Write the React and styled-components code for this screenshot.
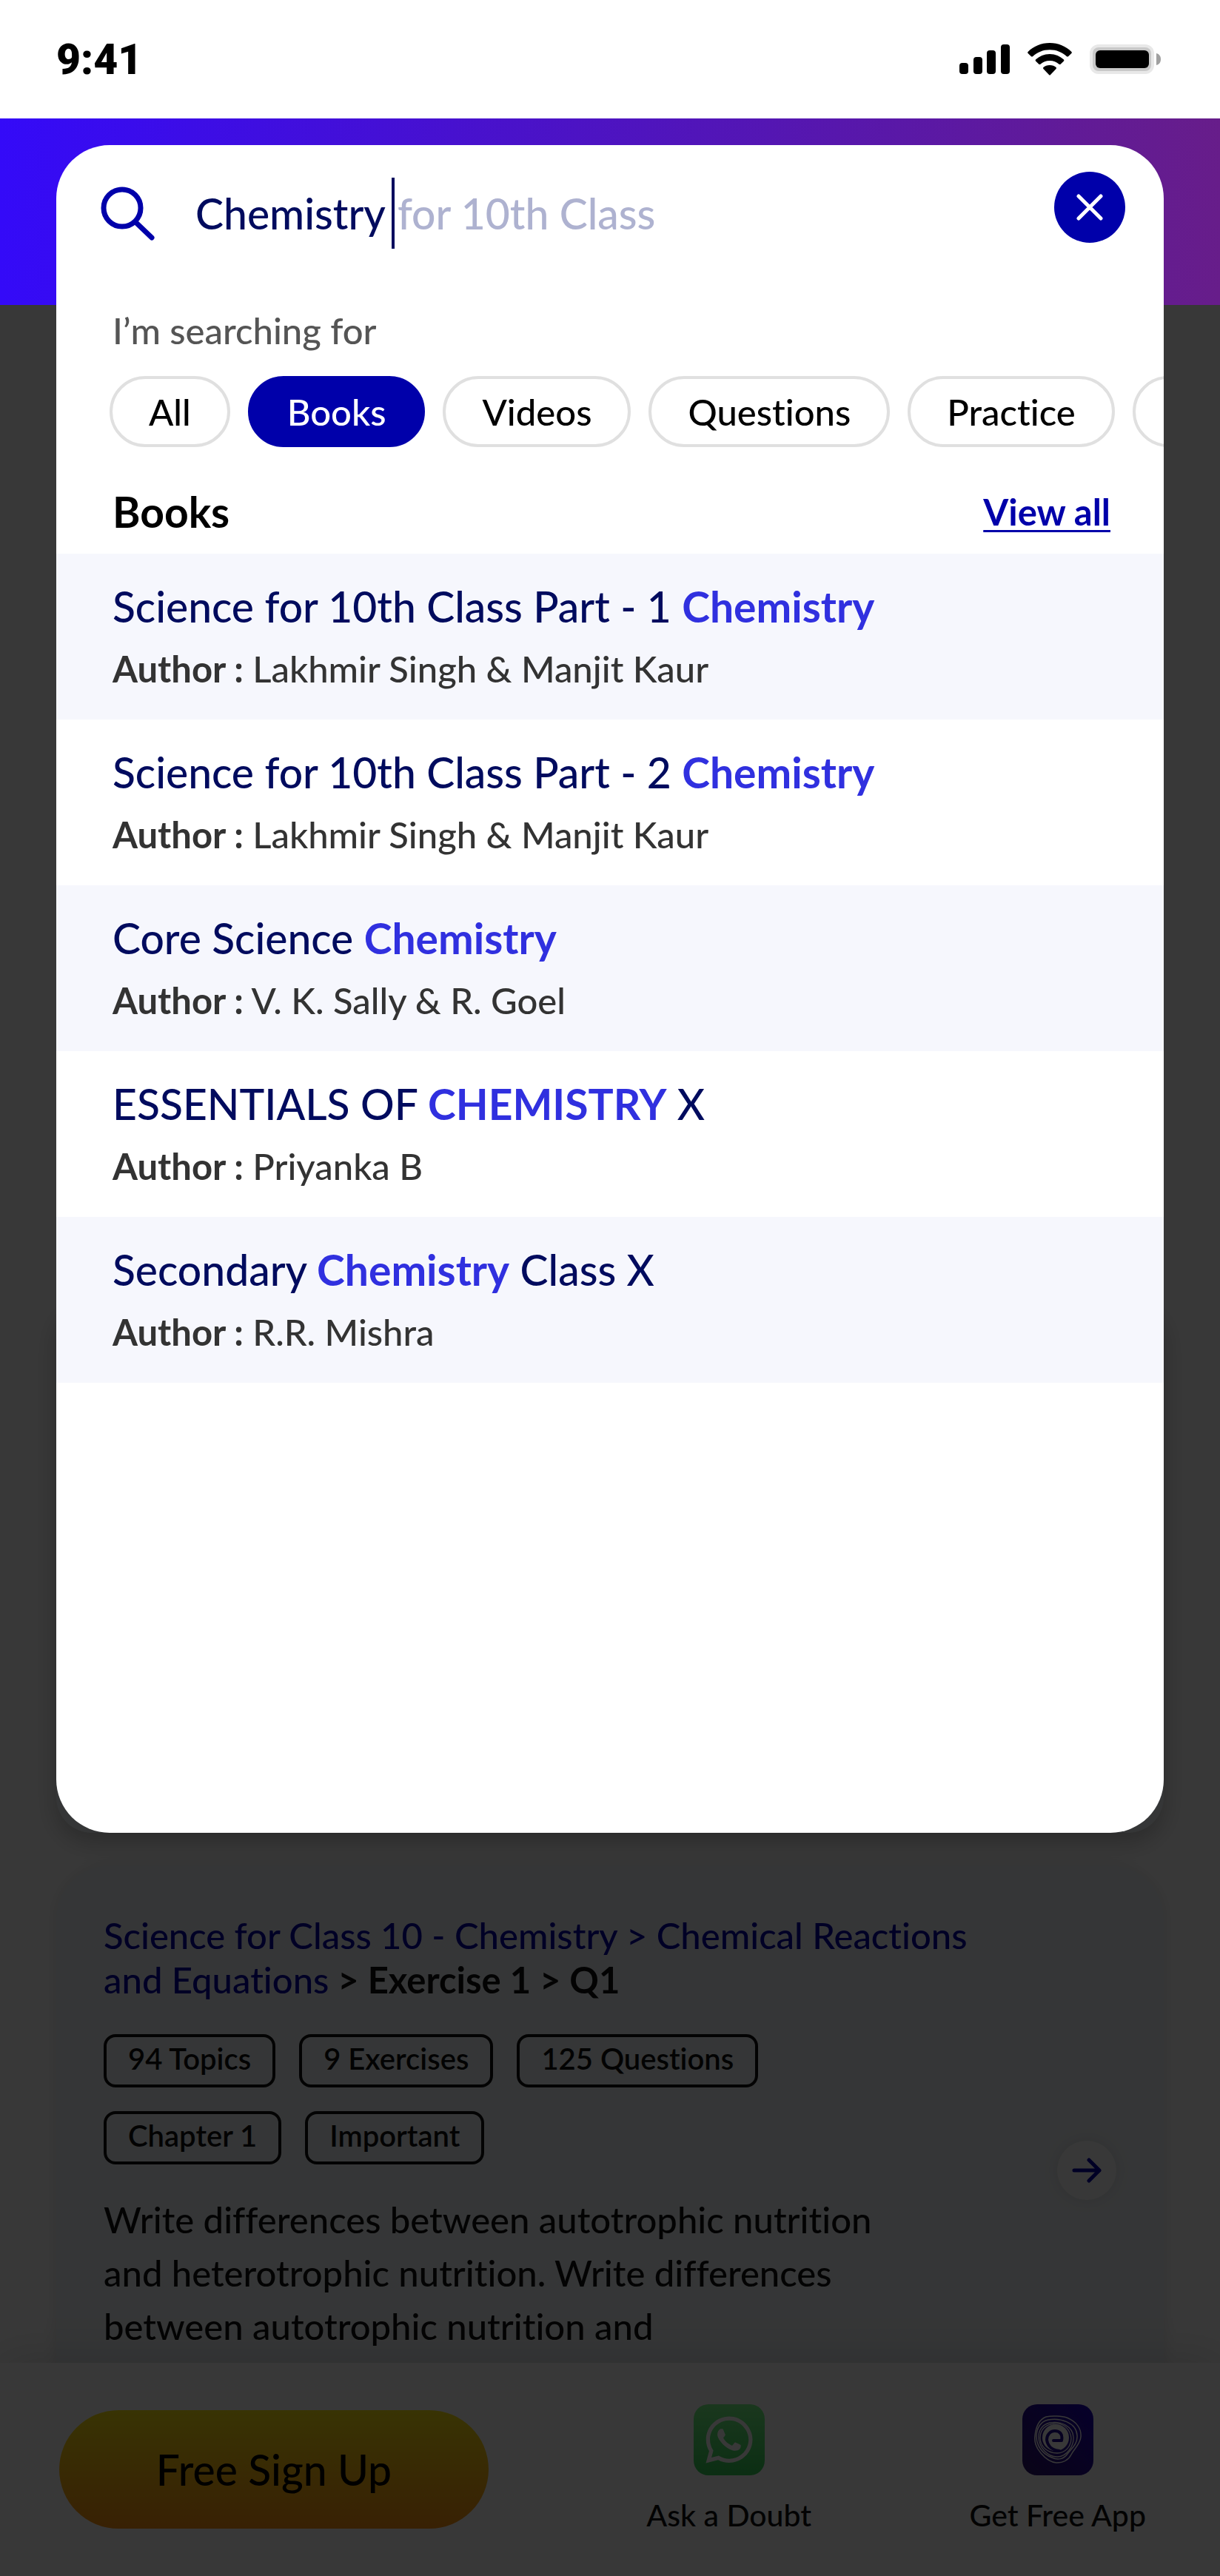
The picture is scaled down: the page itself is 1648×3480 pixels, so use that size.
import { useState } from "react";
import styled, { createGlobalStyle } from "styled-components";
import { FaWhatsapp } from "react-icons/fa";

const GlobalStyle = createGlobalStyle`
  * {
    box-sizing: border-box;
  }

  body {
    margin: 0;
    font-family: Lato, "Liberation Sans", sans-serif;
    font-weight: 500;
    font-variant-ligatures: none;
    background-color: #ffffff;
    color: #000000;
  }

  h2, h3, p, ul {
    margin: 0;
    padding: 0;
  }

  button, input {
    font: inherit;
    font-variant-ligatures: none;
  }
`;

const Page = styled.div`
  min-height: 100vh;
  display: flex;
  flex-direction: column;
`;

const StatusBar = styled.div`
  display: flex;
  align-items: center;
  justify-content: space-between;
  height: 160px;
  padding: 0 80px 0 76px;
`;

const Time = styled.span`
  font-family: Roboto, "Liberation Sans", sans-serif;
  font-size: 57px;
  font-weight: 900;
`;

const StatusIcons = styled.div`
  display: flex;
  align-items: center;
  gap: 24px;
`;

const Header = styled.header`
  height: 252px;
  background: linear-gradient(90deg, #340af8 0%, #671d8a 100%);
`;

const Main = styled.main`
  position: relative;
  flex: 1;
  display: flex;
  flex-direction: column;
`;

const Dim = styled.div`
  position: absolute;
  inset: 0;
  z-index: 2;
  background-color: rgba(0, 0, 0, 0.78);
`;

const Stack = styled.div`
  display: grid;
  margin: -216px 76px 44px;

  & > * {
    grid-area: 1 / 1;
  }
`;

const CoveredCard = styled.div`
  align-self: end;
  height: 720px;
  border-radius: 48px;
  background-color: #f1f5f8;
  box-shadow: 0 12px 32px rgba(0, 0, 0, 0.24);
`;

const Panel = styled.section`
  position: relative;
  z-index: 3;
  min-width: 0;
  min-height: 2280px;
  overflow: hidden;
  border-radius: 72px;
  background-color: #ffffff;
`;

const SearchRow = styled.div`
  display: flex;
  align-items: flex-start;
  justify-content: space-between;
  padding: 36px 52px 0 60px;
`;

const SearchField = styled.label`
  display: flex;
  align-items: center;
  margin-top: 8px;
  height: 96px;
  font-size: 57px;
  color: #000b5e;
`;

const SearchInput = styled.input`
  field-sizing: content;
  margin-left: 54px;
  padding: 0;
  border: none;
  outline: none;
  background: none;
  color: inherit;
`;

const Caret = styled.span`
  width: 4px;
  height: 96px;
  margin: 0 4px 0 8px;
  background-color: #000b5e;
`;

const Suggestion = styled.span`
  color: #aeb2d0;
`;

const CloseButton = styled.button`
  display: flex;
  align-items: center;
  justify-content: center;
  width: 96px;
  height: 96px;
  padding: 0;
  border: none;
  border-radius: 50%;
  background-color: #0000aa;
  cursor: pointer;
`;

const Hint = styled.p`
  margin-top: 80px;
  padding: 0 76px;
  font-size: 49px;
  line-height: 60px;
  color: #555555;
`;

const Chips = styled.div`
  display: flex;
  gap: 24px;
  margin-top: 32px;
  padding-left: 72px;
  overflow: hidden;
`;

const Chip = styled.button`
  flex: none;
  height: 96px;
  padding: 0 49px;
  border: 4px solid ${({ $active }) => ($active ? "#0000aa" : "#e0e0e0")};
  border-radius: 48px;
  background-color: ${({ $active }) => ($active ? "#0000aa" : "#ffffff")};
  color: ${({ $active }) => ($active ? "#ffffff" : "#000000")};
  font-size: 49px;
  cursor: pointer;
`;

const SectionHead = styled.div`
  display: flex;
  align-items: center;
  justify-content: space-between;
  padding: 53px 72px 23px 76px;
`;

const SectionTitle = styled.h2`
  font-size: 57px;
  line-height: 68px;
  font-weight: 700;
`;

const ViewAll = styled.a`
  font-size: 49px;
  line-height: 60px;
  font-weight: 700;
  color: #0000aa;
  text-decoration-thickness: 3px;
  text-underline-offset: 6px;
`;

const BookList = styled.ul`
  list-style: none;
`;

const BookRow = styled.li`
  padding: 37px 76px 39px;

  &:nth-child(odd) {
    background-color: #f6f7fd;
  }
`;

const BookTitle = styled.h3`
  font-size: 57px;
  line-height: 68px;
  font-weight: 500;
  color: #000b5e;
`;

const Match = styled.b`
  font-weight: 700;
  color: #3030df;
`;

const Author = styled.p`
  margin-top: 20px;
  font-size: 49px;
  line-height: 60px;
  color: #333333;
`;

const Question = styled.article`
  display: flex;
  align-items: center;
  justify-content: space-between;
  margin: 0 76px;
  padding: 0 64px;
  border-radius: 72px;
  background-color: #f1f5f8;
  box-shadow: 0 0 20px rgba(0, 0, 0, 0.1);
`;

const QuestionBody = styled.div`
  padding: 64px 0 166px;
`;

const Crumbs = styled.p`
  max-width: 1220px;
  font-size: 49px;
  line-height: 60px;
  font-weight: 700;
  color: #111111;
`;

const CrumbLink = styled.a`
  font-weight: 500;
  color: #0000aa;
  text-decoration: none;
`;

const Tags = styled.div`
  display: flex;
  flex-wrap: wrap;
  gap: 32px;
  max-width: 1000px;
  margin-top: 44px;
`;

const Tag = styled.span`
  height: 72px;
  padding: 0 29px 5px;
  border: 4px solid #111111;
  border-radius: 16px;
  font-size: 40px;
  line-height: 59px;
  font-weight: 600;
  color: #111111;
`;

const Text = styled.p`
  max-width: 1100px;
  margin-top: 38px;
  font-size: 49px;
  line-height: 72px;
  color: #111111;
`;

const OpenLink = styled.a`
  flex: none;
  display: flex;
  align-items: center;
  justify-content: center;
  width: 80px;
  height: 80px;
  border-radius: 50%;
  background-color: #ffffff;
  box-shadow: 0 0 20px rgba(0, 0, 0, 0.1);
`;

/* the bar covers the tail of the last card */
const BottomBar = styled.footer`
  position: relative;
  display: flex;
  align-items: center;
  justify-content: space-between;
  margin-top: -152px;
  padding: 56px 100px 56px 80px;
  background-color: #ffffff;
  box-shadow: 0 0 60px rgba(0, 0, 0, 0.16);
`;

const SignUp = styled.button`
  width: 580px;
  height: 160px;
  border: none;
  border-radius: 80px;
  background: linear-gradient(180deg, #ffe816 0%, #ff9416 100%);
  font-size: 57px;
  color: #000000;
  cursor: pointer;
`;

const BarLink = styled.a`
  display: flex;
  flex-direction: column;
  align-items: center;
  gap: 28px;
  font-size: 41px;
  line-height: 52px;
  color: #111111;
  text-decoration: none;
`;

const WhatsappTile = styled.span`
  display: flex;
  align-items: center;
  justify-content: center;
  width: 96px;
  height: 96px;
  border-radius: 20px;
  background: linear-gradient(180deg, #78fb88 0%, #34d058 100%);
  color: #ffffff;
`;

const SignalIcon = () => (
  <svg width="68" height="44" viewBox="0 0 68 44" aria-hidden="true">
    <rect x="0" y="27" width="12" height="15" rx="4" />
    <rect x="19" y="19" width="12" height="23" rx="4" />
    <rect x="37" y="10" width="12" height="32" rx="4" />
    <rect x="56" y="2" width="12" height="40" rx="4" />
  </svg>
);

const WifiIcon = () => (
  <svg width="60" height="44" viewBox="0 0 60 44" aria-hidden="true">
    <path d="M30 0C18.500 0 8 4.600 0.600 12Q-0.300 13 0.600 14L5 18.200Q6 19 7 18.200C13 12.600 21 9.200 30 9.200S47 12.600 53 18.200Q54 19 55 18.200L59.400 14Q60.300 13 59.400 12C52 4.600 41.500 0 30 0Z" />
    <path d="M30 15C22.500 15 16 17.900 11 22.600Q10.200 23.500 11 24.400L15.400 28.700Q16.400 29.500 17.400 28.700C20.800 25.800 25 24 30 24S39.200 25.800 42.600 28.700Q43.600 29.500 44.600 28.700L49 24.400Q49.800 23.500 49 22.600C44 17.900 37.500 15 30 15Z" />
    <path d="M30 30C26.500 30 23.500 31.100 21.400 33Q20.600 34 21.400 35L29 43Q30 44 31 43L38.600 35Q39.400 34 38.600 33C36.500 31.100 33.500 30 30 30Z" />
  </svg>
);

const BatteryIcon = () => (
  <svg width="96" height="40" viewBox="0 0 96 40" aria-hidden="true">
    <rect width="87" height="40" rx="12" fill="#e8e8e8" />
    <rect x="4" y="4" width="79" height="32" rx="8" fill="#c8c8c8" />
    <rect x="8" y="8" width="72" height="24" rx="6" fill="#000000" />
    <path d="M90 12C94 13 96 16 96 20S94 27 90 28Z" fill="#a0a0a0" />
  </svg>
);

const SearchIcon = () => (
  <svg
    width="74"
    height="74"
    viewBox="0 0 74 74"
    fill="none"
    stroke="#0000aa"
    strokeWidth="7"
    strokeLinecap="round"
    aria-hidden="true"
  >
    <circle cx="29" cy="30" r="25" />
    <path d="M47 49L69 70" />
  </svg>
);

const CloseIcon = () => (
  <svg
    width="36"
    height="36"
    viewBox="0 0 36 36"
    stroke="#ffffff"
    strokeWidth="5"
    strokeLinecap="round"
    aria-hidden="true"
  >
    <path d="M3 3L33 33M33 3L3 33" />
  </svg>
);

const ArrowIcon = () => (
  <svg
    width="40"
    height="36"
    viewBox="0 0 40 36"
    fill="none"
    stroke="#0000aa"
    strokeWidth="5"
    strokeLinecap="round"
    strokeLinejoin="round"
    aria-hidden="true"
  >
    <path d="M3 18H37M23 4L37 18L23 32" />
  </svg>
);

const AppIcon = () => (
  <svg width="96" height="96" viewBox="0 0 96 96" fill="none" aria-hidden="true">
    <defs>
      <linearGradient id="app-bg" x1="0" y1="1" x2="1" y2="0">
        <stop offset="0" stopColor="#2d1568" />
        <stop offset="1" stopColor="#1c00c0" />
      </linearGradient>
    </defs>
    <rect width="96" height="96" rx="20" fill="url(#app-bg)" />
    <g stroke="#ffffff">
      <path
        strokeWidth="1.500"
        d="M32 17C40 15 54 16 60 18C72 23 80 32 79 44C78 54 70 60 66 68C62 76 54 79 46 79C36 78 30 72 25 66C18 58 16 51 17 43C18 32 22 21 32 17Z"
      />
      <path
        strokeWidth="1.500"
        d="M35 21C50 18 73 24 74 42C75 54 66 60 61 67C56 74 48 76 40 72C28 68 19 56 19 44C19 32 25 23 35 21Z"
      />
      <path
        strokeWidth="1.300"
        d="M37 25C52 22 68 30 69 44C70 56 60 71 47 71C34 71 22 58 22 44C22 34 28 27 37 25Z"
      />
      <path
        strokeWidth="1.300"
        d="M43 26C56 25 65 34 66 46C66 57 58 66 47 66C34 66 24 57 24 45C24 34 32 27 43 26Z"
      />
    </g>
    <circle cx="45" cy="45" r="18" fill="#ffffff" />
    <path
      d="M42 49H53C55 40 50 36 44 36C37 36 33 42 33 48C34 57 41 62 50 63"
      stroke="#1f0894"
      strokeWidth="4"
      strokeLinecap="round"
      strokeLinejoin="round"
    />
  </svg>
);

const filters = ["All", "Books", "Videos", "Questions", "Practice"];

const books = [
  {
    before: "Science for 10th Class Part - 1 ",
    match: "Chemistry",
    author: "Lakhmir Singh & Manjit Kaur",
  },
  {
    before: "Science for 10th Class Part - 2 ",
    match: "Chemistry",
    author: "Lakhmir Singh & Manjit Kaur",
  },
  { before: "Core Science ", match: "Chemistry", author: "V. K. Sally & R. Goel" },
  { before: "ESSENTIALS OF ", match: "CHEMISTRY", after: " X", author: "Priyanka B" },
  { before: "Secondary ", match: "Chemistry", after: " Class X", author: "R.R. Mishra" },
];

const tags = ["94 Topics", "9 Exercises", "125 Questions", "Chapter 1", "Important"];

const SearchPanel = () => {
  const [query, setQuery] = useState("Chemistry");
  const [filter, setFilter] = useState("Books");

  return (
    <Panel>
      <SearchRow>
        <SearchField>
          <SearchIcon />
          <SearchInput
            type="text"
            aria-label="Search"
            value={query}
            onChange={(e) => setQuery(e.target.value)}
          />
          <Caret />
          <Suggestion>for 10th Class</Suggestion>
        </SearchField>
        <CloseButton type="button" aria-label="Close search">
          <CloseIcon />
        </CloseButton>
      </SearchRow>
      <Hint>I’m searching for</Hint>
      <Chips>
        {filters.map((name) => (
          <Chip
            key={name}
            type="button"
            $active={name === filter}
            onClick={() => setFilter(name)}
          >
            {name}
          </Chip>
        ))}
        <Chip type="button" aria-label="More filters" />
      </Chips>
      <SectionHead>
        <SectionTitle>Books</SectionTitle>
        <ViewAll href="#books">View all</ViewAll>
      </SectionHead>
      <BookList>
        {books.map((book) => (
          <BookRow key={book.before}>
            <BookTitle>
              {book.before}
              <Match>{book.match}</Match>
              {book.after}
            </BookTitle>
            <Author>
              <b>Author :</b> {book.author}
            </Author>
          </BookRow>
        ))}
      </BookList>
    </Panel>
  );
};

const QuestionCard = () => (
  <Question>
    <QuestionBody>
      <Crumbs>
        <CrumbLink href="#chapter">
          Science for Class 10 - Chemistry &gt; Chemical Reactions and Equations
        </CrumbLink>{" "}
        &gt; Exercise 1 &gt; Q1
      </Crumbs>
      <Tags>
        {tags.map((tag) => (
          <Tag key={tag}>{tag}</Tag>
        ))}
      </Tags>
      <Text>
        Write differences between autotrophic nutrition and heterotrophic
        nutrition. Write differences between autotrophic nutrition and
      </Text>
    </QuestionBody>
    <OpenLink href="#question" aria-label="Open question">
      <ArrowIcon />
    </OpenLink>
  </Question>
);

export default function App() {
  return (
    <Page>
      <GlobalStyle />
      <StatusBar>
        <Time>9:41</Time>
        <StatusIcons>
          <SignalIcon />
          <WifiIcon />
          <BatteryIcon />
        </StatusIcons>
      </StatusBar>
      <Header />
      <Main>
        <Stack>
          <CoveredCard />
          <SearchPanel />
        </Stack>
        <QuestionCard />
        <BottomBar>
          <SignUp type="button">Free Sign Up</SignUp>
          <BarLink href="#doubt">
            <WhatsappTile>
              <FaWhatsapp size={72} />
            </WhatsappTile>
            Ask a Doubt
          </BarLink>
          <BarLink href="#app">
            <AppIcon />
            Get Free App
          </BarLink>
        </BottomBar>
        <Dim />
      </Main>
    </Page>
  );
}
